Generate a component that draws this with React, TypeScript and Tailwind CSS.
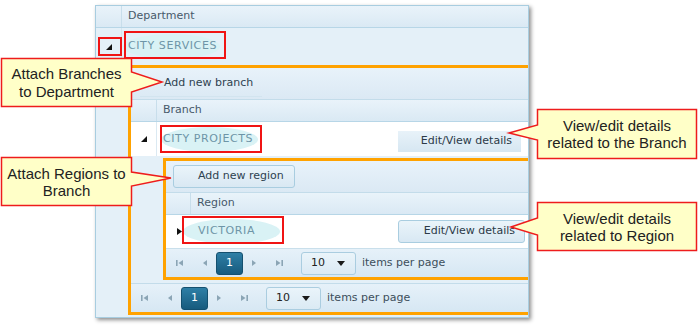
import React from 'react';

const ORANGE = 'border-[#ffa200]';

const HierArrow = () => (
  <svg width="6" height="6" viewBox="0 0 6 6" className="shrink-0">
    <polygon points="6,0 6,6 0,6" fill="#111" />
  </svg>
);

const RightArrow = () => (
  <svg width="5" height="7" viewBox="0 0 5 7" className="shrink-0">
    <polygon points="0,0 5,3.5 0,7" fill="#111" />
  </svg>
);

const PagerIcon = ({ kind }: { kind: 'first' | 'prev' | 'next' | 'last' }) => (
  <svg width="10" height="8" viewBox="0 0 10 8" className="shrink-0">
    {kind === 'first' && (
      <>
        <rect x="1" y="1" width="1.6" height="6" fill="#8ba5b5" />
        <polygon points="8,1 3.5,4 8,7" fill="#8ba5b5" />
      </>
    )}
    {kind === 'prev' && <polygon points="7,1 3,4 7,7" fill="#8ba5b5" />}
    {kind === 'next' && <polygon points="3,1 7,4 3,7" fill="#8ba5b5" />}
    {kind === 'last' && (
      <>
        <polygon points="2,1 6.5,4 2,7" fill="#8ba5b5" />
        <rect x="7.4" y="1" width="1.6" height="6" fill="#8ba5b5" />
      </>
    )}
  </svg>
);

const Pill = ({ children, pad, shift = 0 }: { children: React.ReactNode; pad: string; shift?: number }) => (
  <span
    className={`relative inline-flex items-center w-[97px] h-[25px] rounded-[50%] bg-[#d9f2f5] text-[#6e95a7] tracking-[0.6px] whitespace-nowrap ${pad}`}
    style={{ marginLeft: shift }}
  >
    {children}
  </span>
);

const Pager = () => (
  <div className="flex items-center h-[28px] pl-[9px] bg-gradient-to-b from-[#e6f1f9] to-[#d6e7f3] text-[#3c4e5b]">
    <PagerIcon kind="first" />
    <div className="ml-[15px]"><PagerIcon kind="prev" /></div>
    <div className="ml-[6px] w-[27px] h-[23px] rounded-[3px] bg-gradient-to-b from-[#2e7fa6] to-[#175b7e] border border-[#14506f] text-white flex items-center justify-center">
      1
    </div>
    <div className="ml-[6px]"><PagerIcon kind="next" /></div>
    <div className="ml-[15px]"><PagerIcon kind="last" /></div>
    <div className="ml-[17px] w-[55px] h-[23px] rounded-[3px] border border-[#aacde0] bg-gradient-to-b from-[#eaf4fa] to-[#dbeaf4] flex items-center justify-between pl-[9px] pr-[10px] text-[#222]">
      <span>10</span>
      <svg width="8" height="5" viewBox="0 0 8 5">
        <polygon points="0,0 8,0 4,5" fill="#1a1a1a" />
      </svg>
    </div>
    <span className="ml-[6px]">items per page</span>
  </div>
);

const HeaderRow = ({ label, hierW }: { label: string; hierW: string }) => (
  <div className="flex h-[22px] border-b border-[#b7d6e7] bg-gradient-to-b from-[#e9f3fa] to-[#dae9f4] text-[#47596a]">
    <div className={`${hierW} border-r border-[#c8deeb] shrink-0`} />
    <div className="flex items-center pl-[6px]">{label}</div>
  </div>
);

const Callout = ({ path }: { path: string }) => (
  <path d={path} fill="#ffffc8" stroke="#ee1c1c" strokeWidth="1.5" strokeLinejoin="miter" />
);

export default function App() {
  return (
    <div className="relative w-[699px] h-[327px] bg-white overflow-hidden font-['DejaVu_Sans',Verdana,sans-serif] text-[11px]">
      <div className="pl-[95px] pt-[5px]">
        <div className="w-[434px] border border-[#a8cde0] bg-[#e4f0f8] shadow-[2px_2px_4px_rgba(0,0,0,0.45)] pb-[2px]">
          <HeaderRow label="Department" hierW="w-[26px]" />

          <div className="flex h-[37px]">
            <div className="w-[26px] shrink-0 flex items-center justify-center border-r border-[#d3e6f1]">
              <HierArrow />
            </div>
            <div className="flex items-center pl-[1px]">
              <Pill pad="pl-[5px]">CITY SERVICES</Pill>
            </div>
          </div>

          {/* branch detail */}
          <div className="flex">
            <div className="w-[32px] shrink-0" />
            <div className={`flex-1 border-l-[3px] border-y-[3px] ${ORANGE} bg-[#e4f0f8]`}>
              <div className="flex items-center h-[32px] border-b border-[#c3dcea] bg-gradient-to-b from-[#e8f2fa] to-[#dbe9f4]">
                <div className="ml-[9px] w-[122px] h-[26px] border-b border-[#d2e4ef] flex items-center pl-[24px] text-[#2e4250]">
                  Add new branch
                </div>
              </div>
              <HeaderRow label="Branch" hierW="w-[26px]" />

              <div className="flex h-[34px] bg-white">
                <div className="w-[26px] shrink-0 flex items-center justify-center border-r border-[#dbe9f2]">
                  <HierArrow />
                </div>
                <div className="flex-1 flex items-center pl-[4px]">
                  <Pill pad="pl-[2px]">CITY PROJECTS</Pill>
                </div>
                <div className="self-end mb-[4px] mr-[7px] w-[123px] h-[21px] bg-gradient-to-b from-[#e8f2f9] to-[#d6e7f2] flex items-center justify-end pr-[9px] text-[#2b3a48]">
                  Edit/View details
                </div>
              </div>

              {/* region detail */}
              <div className="flex pt-[2px] pb-[3px] border-b border-[#c3dcea]">
                <div className="w-[32px] shrink-0" />
                <div className={`flex-1 border-l-[3px] border-y-[3px] ${ORANGE} bg-[#e4f0f8]`}>
                  <div className="flex items-center h-[32px] border-b border-[#c3dcea] bg-gradient-to-b from-[#e8f2fa] to-[#dbe9f4]">
                    <div className="ml-[7px] w-[122px] h-[23px] rounded-[3px] border border-[#a9cde0] bg-gradient-to-b from-[#eaf4fa] to-[#d9e8f3] flex items-center pl-[24px] text-[#2e4250]">
                      Add new region
                    </div>
                  </div>
                  <HeaderRow label="Region" hierW="w-[25px]" />

                  <div className="flex h-[34px] bg-white border-b border-[#c9dfeb]">
                    <div className="w-[25px] shrink-0 flex items-center justify-center pl-[1px]">
                      <RightArrow />
                    </div>
                    <div className="flex-1 flex items-center">
                      <Pill pad="pl-[15px]" shift={-8}>VICTORIA</Pill>
                    </div>
                    <div className="self-center mr-[3px] w-[127px] h-[23px] rounded-[3px] border border-[#a9cde0] bg-gradient-to-b from-[#eaf4fa] to-[#d8e8f3] flex items-center justify-end pr-[9px] text-[#2b3a48]">
                      Edit/View details
                    </div>
                  </div>

                  <Pager />
                </div>
              </div>

              <Pager />
            </div>
          </div>
        </div>
      </div>

      {/* annotation highlights */}
      <div className="absolute left-[98px] top-[37px] w-[24px] h-[19px] border-2 border-[#f01414]" />
      <div className="absolute left-[124px] top-[31px] w-[102px] h-[28px] border-2 border-[#f01414]" />
      <div className="absolute left-[160px] top-[125px] w-[102px] h-[28px] border-2 border-[#f01414]" />
      <div className="absolute left-[182px] top-[216px] w-[102px] h-[28px] border-2 border-[#f01414]" />

      {/* callouts */}
      <svg className="absolute inset-0 pointer-events-none" width="699" height="327" viewBox="0 0 699 327">
        <Callout path="M1.5,58.5 H131.5 V72 L162,82 L131.5,92 V106.5 H1.5 Z" />
        <Callout path="M1.5,157.5 H131.5 V172 L171,178 L131.5,186 V205.5 H1.5 Z" />
        <Callout path="M537.5,109.5 H696.5 V158.5 H537.5 V140 L509,133 L537.5,125 Z" />
        <Callout path="M537.5,202.5 H696.5 V250.5 H537.5 V235 L511,227 L537.5,218 Z" />
      </svg>

      <div className="absolute left-[2px] top-[59px] w-[129px] h-[47px] flex items-center justify-center text-center font-['Liberation_Sans',Arial,sans-serif] text-[15px] leading-[18px] text-[#222]">
        Attach Branches<br />to Department
      </div>
      <div className="absolute left-[2px] top-[158px] w-[129px] h-[47px] flex items-center justify-center text-center font-['Liberation_Sans',Arial,sans-serif] text-[15px] leading-[17px] text-[#222]">
        Attach Regions to<br />Branch
      </div>
      <div className="absolute left-[538px] top-[110px] w-[158px] h-[48px] flex items-center justify-center text-center font-['Liberation_Sans',Arial,sans-serif] text-[15px] leading-[17px] text-[#222]">
        View/edit details<br />related to the Branch
      </div>
      <div className="absolute left-[538px] top-[203px] w-[158px] h-[47px] flex items-center justify-center text-center font-['Liberation_Sans',Arial,sans-serif] text-[15px] leading-[17px] text-[#222]">
        View/edit details<br />related to Region
      </div>
    </div>
  );
}
